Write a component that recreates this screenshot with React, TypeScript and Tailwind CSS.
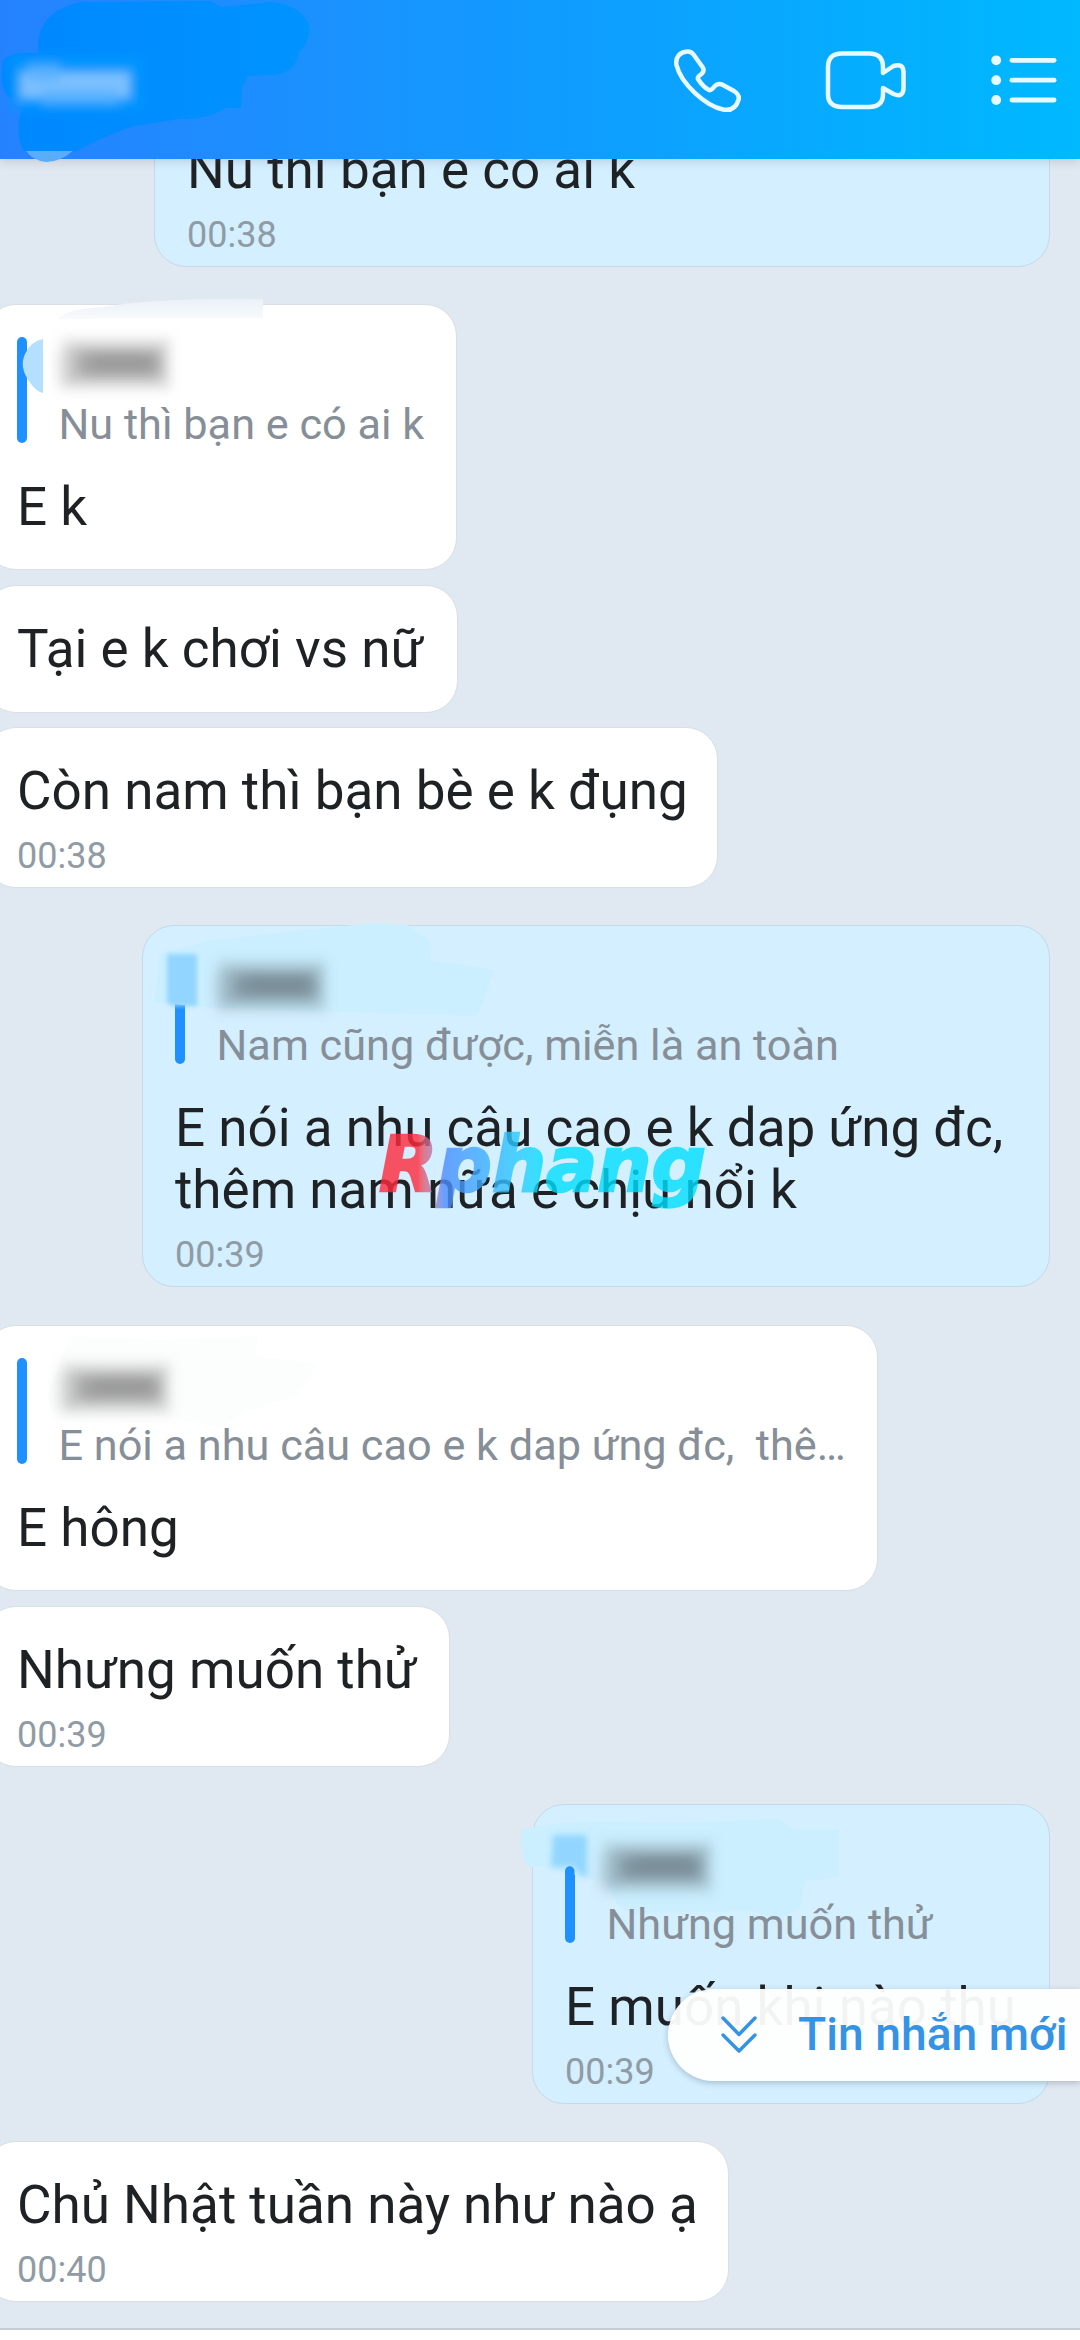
import type { ReactNode } from 'react';
import { clsx } from 'clsx';

interface Message {
  id: number;
  side: 'in' | 'out';
  box: string;
  lines: string[];
  quote?: string;
  time?: string;
  smudge?: ReactNode;
}

// Mosaic patch that hides a sender name in a quoted message
function NameMosaic({ tone }: { tone: string }) {
  return (
    <svg width="150" height="80" viewBox="-10 0 150 80" fill={tone}>
      <defs>
        <filter id="soft" x="-20%" y="-20%" width="140%" height="140%">
          <feGaussianBlur stdDeviation="6" />
        </filter>
      </defs>
      <g filter="url(#soft)">
        <rect x="-2" y="24" width="20" height="34" opacity="0.12" />
        <rect x="4" y="12" width="110" height="52" opacity="0.22" />
        <rect x="12" y="20" width="96" height="36" rx="6" opacity="0.35" />
        <rect x="22" y="26" width="80" height="24" rx="8" opacity="0.55" />
        <rect x="36" y="29" width="58" height="14" rx="6" opacity="0.4" />
      </g>
    </svg>
  );
}

const messages: Message[] = [
  { id: 1, side: 'out', box: 'w-[896px]', lines: ['Nu thì bạn e có ai k'], time: '00:38' },
  {
    id: 2,
    side: 'in',
    box: 'w-[473px] mt-[37px]',
    quote: 'Nu thì bạn e có ai k',
    lines: ['E k'],
    smudge: (
      <>
        <svg className="absolute left-0 -top-2 z-10" width="400" height="120" viewBox="-16 -8 400 120">
          <defs>
            <linearGradient id="fadeTop" x1="0" x2="0" y1="0" y2="1">
              <stop offset="0" stopColor="#e9f1f8" />
              <stop offset="1" stopColor="#f8fbfc" />
            </linearGradient>
          </defs>
          <path d="M56 14 Q66 4 100 2 L130 -2 Q190 -7 262 -6 L262 13 L58 14 Z" fill="url(#fadeTop)" />
          <path d="M42 34 Q30 36 24 49 Q18 62 28 76 Q34 86 42 88 Z" fill="#b5dfff" />
        </svg>
        <div className="absolute left-[62px] top-[21px]"><NameMosaic tone="#8a8a8a" /></div>
      </>
    ),
  },
  { id: 3, side: 'in', box: 'w-[474px] mt-[15px]', lines: ['Tại e k chơi vs nữ'] },
  { id: 4, side: 'in', box: 'w-[734px] mt-[14px]', lines: ['Còn nam thì bạn bè e k đụng'], time: '00:38' },
  {
    id: 5,
    side: 'out',
    box: 'w-[908px] mt-[37px]',
    quote: 'Nam cũng được, miễn là an toàn',
    lines: ['E nói a nhu câu cao e k dap ứng đc,', 'thêm nam nữa e chịu nổi k'],
    time: '00:39',
    smudge: (
      <>
        <svg className="absolute left-0 -top-1 z-10" width="400" height="120" viewBox="0 -4 400 120">
          <path d="M68 14 Q160 4 232 -3 L264 -1 L286 14 L288 34 L352 44 L334 90 L70 82 L12 76 L16 28 Z" fill="#cbefff" />
          <path d="M24 28 H54 V80 H30 Q22 78 24 72 Z" fill="#92d5ff" className="blur-[2px]" />
        </svg>
        <div className="absolute left-[60px] top-[22px] z-20"><NameMosaic tone="#6b7d86" /></div>
      </>
    ),
  },
  {
    id: 6,
    side: 'in',
    box: 'w-[894px] mt-[38px]',
    quote: 'E nói a nhu câu cao e k dap ứng đc,  thê…',
    lines: ['E hông'],
    smudge: (
      <>
        <svg className="absolute left-0 top-0" width="400" height="110" viewBox="-16 0 400 110">
          <path d="M66 20 L74 10 L160 14 L258 10 L254 30 L316 38 L296 70 L244 86 L220 102 L160 90 L56 94 Q44 80 50 60 Z" fill="#fcfdfd" />
        </svg>
        <div className="absolute left-[62px] top-[24px]"><NameMosaic tone="#8a8a8a" /></div>
      </>
    ),
  },
  { id: 7, side: 'in', box: 'w-[466px] mt-[15px]', lines: ['Nhưng muốn thử'], time: '00:39' },
  {
    id: 8,
    side: 'out',
    box: 'w-[518px] mt-[37px]',
    quote: 'Nhưng muốn thử',
    lines: ['E muốn khi nào thu'],
    time: '00:39',
    smudge: (
      <>
        <svg className="absolute -left-4 top-0 z-10" width="400" height="130" viewBox="-16 0 400 130">
          <path d="M-10 24 Q40 12 130 18 L246 14 L258 24 L306 24 V72 L272 76 L268 100 Q258 114 236 112 L220 106 L96 108 Q78 96 75 78 L58 74 L10 62 L-6 62 Q-16 42 -10 24 Z" fill="#cbefff" />
          <path d="M20 30 H54 V72 Q46 72 42 62 H18 Z" fill="#92d5ff" className="blur-[3px]" />
          <path d="M36.750 120 V66" stroke="#1e90ff" strokeWidth="9.500" strokeLinecap="round" />
        </svg>
        <div className="absolute left-[56px] top-[24px] z-20"><NameMosaic tone="#6b7d86" /></div>
      </>
    ),
  },
  { id: 9, side: 'in', box: 'w-[745px] mt-[37px]', lines: ['Chủ Nhật tuần này như nào ạ'], time: '00:40' },
];

function Header() {
  return (
    <header className="relative z-30 flex h-[159px] shrink-0 items-center justify-end bg-linear-to-r from-[#2582ff] via-[#109bff] to-[#00b9ff] shadow-[0_1px_10px_rgba(60,80,100,0.25)]">
      <svg className="absolute left-0 top-0" width="330" height="164" viewBox="0 0 330 164">
        <defs>
          <linearGradient id="patch" x1="0" x2="1">
            <stop offset="0" stopColor="#0087ff" />
            <stop offset="1" stopColor="#0094ff" />
          </linearGradient>
          <filter id="nameBlur" x="-20%" y="-30%" width="140%" height="160%">
            <feGaussianBlur stdDeviation="5" />
          </filter>
        </defs>
        <path
          d="M38 46 Q38 12 80 2 L210 1 L222 7 L272 2 Q306 6 310 30 Q308 44 299 52 Q296 72 275 75 L248 76 L242 88 L241 108 L226 108 Q208 120 180 119 L134 126 Q110 134 72 153 L52 160 L24 151 Q12 130 25 101 L8 97 Q-2 84 3 60 Q14 50 38 54 Z"
          fill="url(#patch)"
        />
        <path d="M26 151 H73 Q60 162 46 162 Q32 160 26 151 Z" fill="#58adff" />
        <g filter="url(#nameBlur)">
          <rect x="10" y="56" width="132" height="54" fill="#009aff" opacity="0.7" />
          <rect x="20" y="72" width="110" height="26" fill="#7cc0ff" />
          <rect x="28" y="64" width="32" height="18" fill="#5fb2ff" opacity="0.8" />
          <rect x="42" y="90" width="76" height="15" fill="#58b0ff" opacity="0.8" />
        </g>
      </svg>
      <div className="flex items-center pr-[22px] text-[#e8faff]">
        <svg width="70" height="66" viewBox="671 47 70 66" fill="none" stroke="currentColor" strokeWidth="4.500" strokeLinejoin="round">
          <path d="M675.500 65 C674 57 679 52 686 51.500 Q690 51 692.500 54.500 L701.500 67 Q704 71 700.500 74 Q696 77 697 79 Q702 87 708 90 Q710 91 713 87 Q716 83 721 84.500 L733 91 Q739 95 737.500 100 C735 108 730 111 722 109.500 C705 106 680 84 675.500 65 Z" />
        </svg>
        <svg className="ml-[83px]" width="82" height="60" viewBox="824 50 82 60" fill="none" stroke="currentColor" strokeWidth="4.500" strokeLinejoin="round">
          <path d="M882 73 V67 Q882 53.500 868 53.500 H841 Q827 53.500 827 67 V94 Q827 107 841 107 H868 Q882 107 882 94 V88 L892.500 94 Q902.500 98 902.500 88 V72 Q902.500 63 892.500 66 Z" />
        </svg>
        <svg className="ml-[82px]" width="69" height="54" viewBox="988 53 69 54" fill="currentColor">
          {[60.3, 80.2, 100].map((y) => (
            <g key={y}>
              <circle cx="995.200" cy={y} r="4.900" />
              <rect x="1008.500" y={y - 2.4} width="47" height="4.800" rx="2.400" />
            </g>
          ))}
        </svg>
      </div>
    </header>
  );
}

function Bubble({ msg }: { msg: Message }) {
  return (
    <div
      className={clsx(
        'relative shrink-0 rounded-[32px] border pl-8 pt-8',
        msg.side === 'out'
          ? 'mr-[30px] self-end border-[#c3dae8] bg-[#d4efff]'
          : '-ml-4 self-start border-[#dadfe5] bg-white',
        msg.time ? 'pb-[10px]' : msg.quote ? 'pb-[31px]' : 'pb-8',
        msg.box,
      )}
    >
      {msg.smudge}
      {msg.quote && (
        <div className="mb-[33px] flex h-[106px]">
          <div className="h-full w-[9.5px] rounded-full bg-[#1e90ff]" />
          <p className="relative z-10 ml-[32px] whitespace-pre pt-[61px] text-[43.25px] leading-[53px] text-[#868e97]">{msg.quote}</p>
        </div>
      )}
      {msg.lines.map((line) => (
        <p key={line} className="whitespace-nowrap text-[53px] leading-[62px] text-[#1f2224]">{line}</p>
      ))}
      {msg.time && <p className="mt-[14px] text-[36px] leading-[41px] text-[#8f9ba5]">{msg.time}</p>}
    </div>
  );
}

export default function App() {
  return (
    <div className="relative flex h-[2340px] w-[1080px] flex-col overflow-hidden bg-[#e0e8f1] font-['Roboto',sans-serif]">
      <Header />
      <main className="-mt-[53px] flex flex-1 flex-col">
        {messages.map((msg) => (
          <Bubble key={msg.id} msg={msg} />
        ))}
      </main>
      <footer className="h-3 shrink-0 border-t-2 border-[#c5ccd3] bg-white" />

      {/* Watermark */}
      <div className="absolute left-[379px] top-[1120px] z-20 bg-linear-to-r from-[#ff2a3c] from-[12%] via-[#4a8cff] via-[20%] to-[#00dfff] to-[50%] bg-clip-text font-['DejaVu_Sans'] text-[76px] leading-[90px] font-bold italic whitespace-nowrap text-transparent opacity-80 [-webkit-text-stroke:2.5px_transparent]">
        Rphang
      </div>

      {/* Jump to new messages */}
      <button className="absolute right-0 top-[1989px] z-20 flex h-[92px] w-[412px] items-center rounded-l-full bg-white/95 pl-[52px] shadow-[0_2px_6px_rgba(60,80,100,0.3)]">
        <svg width="38" height="40" viewBox="0 0 38 40" fill="none" stroke="#3593e6" strokeWidth="3.500" strokeLinecap="round" strokeLinejoin="round">
          <path d="M3 3 L19 19.500 L35 3" />
          <path d="M3 20 L19 36 L35 20" />
        </svg>
        <span className="ml-[40px] whitespace-nowrap text-[46.25px] font-medium text-[#3593e6]">Tin nhắn mới</span>
      </button>
    </div>
  );
}
